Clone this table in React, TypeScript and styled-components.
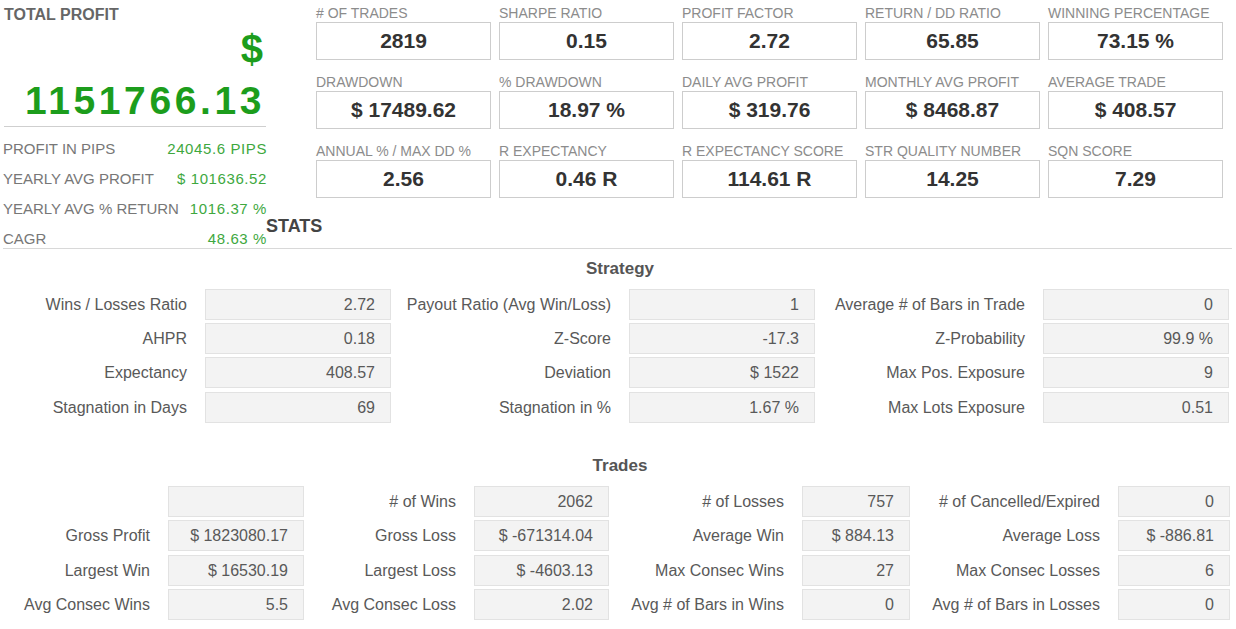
import styled, { createGlobalStyle } from "styled-components";

const GlobalStyle = createGlobalStyle`
  html, body {
    margin: 0;
    padding: 0;
    background: #fff;
  }
  body {
    font-family: "Liberation Sans", Arial, sans-serif;
    color: #555;
  }
`;

const Page = styled.div`
  width: 1236px;
`;

const Summary = styled.div`
  display: flex;
  margin: 0 4px 0 3px;
  border-bottom: 1px solid #d8d8d8;
`;

const ProfitPanel = styled.div`
  width: 263px;
  flex-shrink: 0;
`;

const PanelTitle = styled.div`
  margin-top: 6px;
  font-size: 16px;
  line-height: 18px;
  font-weight: bold;
  color: #666;
  padding-left: 1px;
`;

const Amount = styled.div`
  text-align: right;
  color: #1c9d1c;
  font-weight: bold;
  border-bottom: 1px solid #cfcfcf;
  margin-left: 1px;
  padding: 0 3px 6px 0;
`;

const Currency = styled.div`
  margin-top: 5px;
  font-size: 40px;
  line-height: 40px;
`;

const BigAmount = styled.div`
  margin-top: 12px;
  font-size: 39px;
  line-height: 39px;
  letter-spacing: 3.6px;
  margin-right: -2px;
`;

const PanelRows = styled.div`
  display: flex;
  flex-direction: column;
  gap: 12px;
  padding-top: 13px;
`;

const PanelRow = styled.div`
  display: flex;
  justify-content: space-between;
  align-items: center;
  font-size: 15px;
  line-height: 18px;
`;

const PanelLabel = styled.span`
  color: #777;
`;

const PanelValue = styled.span`
  color: #3ea83e;
  letter-spacing: 0.6px;
  margin-right: -1px;
`;

const Overview = styled.div`
  flex: 1;
  display: flex;
  flex-direction: column;
`;

const KpiGrid = styled.div`
  display: grid;
  grid-template-columns: repeat(5, 175px);
  column-gap: 8px;
  row-gap: 14px;
  margin: 5px 0 0 50px;
`;

const Kpi = styled.div`
  display: flex;
  flex-direction: column;
  gap: 1px;
`;

const KpiLabel = styled.div`
  font-size: 14px;
  line-height: 16px;
  color: #8c8c8c;
  white-space: nowrap;
`;

const KpiBox = styled.div`
  height: 36px;
  border: 1px solid #cdcdcd;
  box-sizing: content-box;
  text-align: center;
  font-size: 21px;
  font-weight: bold;
  line-height: 36px;
  color: #333;
`;

const StatsTitle = styled.div`
  margin-top: 18px;
  font-size: 18px;
  line-height: 20px;
  font-weight: bold;
  color: #444;
`;

const Section = styled.section<{ $gap: number }>`
  margin-top: ${(p) => p.$gap}px;
`;

const SectionTitle = styled.div`
  text-align: center;
  font-size: 17px;
  line-height: 20px;
  font-weight: bold;
  color: #555;
  padding-left: 4px;
`;

const StatGrid = styled.div<{ $columns: string; $rowGap: number }>`
  display: grid;
  grid-template-columns: ${(p) => p.$columns};
  row-gap: ${(p) => p.$rowGap}px;
  margin-top: 10px;
`;

const StatLabel = styled.div`
  text-align: right;
  padding-right: 18px;
  font-size: 16px;
  line-height: 31px;
  color: #595959;
  white-space: nowrap;
`;

const StatBox = styled.div`
  height: 29px;
  border: 1px solid #e2e2e2;
  background: #f3f3f3;
  text-align: right;
  padding-right: 15px;
  font-size: 16px;
  line-height: 29px;
  color: #595959;
`;

type Pair = [string, string];

const kpis: Pair[] = [
  ["# OF TRADES", "2819"],
  ["SHARPE RATIO", "0.15"],
  ["PROFIT FACTOR", "2.72"],
  ["RETURN / DD RATIO", "65.85"],
  ["WINNING PERCENTAGE", "73.15 %"],
  ["DRAWDOWN", "$ 17489.62"],
  ["% DRAWDOWN", "18.97 %"],
  ["DAILY AVG PROFIT", "$ 319.76"],
  ["MONTHLY AVG PROFIT", "$ 8468.87"],
  ["AVERAGE TRADE", "$ 408.57"],
  ["ANNUAL % / MAX DD %", "2.56"],
  ["R EXPECTANCY", "0.46 R"],
  ["R EXPECTANCY SCORE", "114.61 R"],
  ["STR QUALITY NUMBER", "14.25"],
  ["SQN SCORE", "7.29"],
];

const profitRows: Pair[] = [
  ["PROFIT IN PIPS", "24045.6 PIPS"],
  ["YEARLY AVG PROFIT", "$ 101636.52"],
  ["YEARLY AVG % RETURN", "1016.37 %"],
  ["CAGR", "48.63 %"],
];

const strategy: Pair[] = [
  ["Wins / Losses Ratio", "2.72"],
  ["Payout Ratio (Avg Win/Loss)", "1"],
  ["Average # of Bars in Trade", "0"],
  ["AHPR", "0.18"],
  ["Z-Score", "-17.3"],
  ["Z-Probability", "99.9 %"],
  ["Expectancy", "408.57"],
  ["Deviation", "$ 1522"],
  ["Max Pos. Exposure", "9"],
  ["Stagnation in Days", "69"],
  ["Stagnation in %", "1.67 %"],
  ["Max Lots Exposure", "0.51"],
];

const trades: Pair[] = [
  ["", ""],
  ["# of Wins", "2062"],
  ["# of Losses", "757"],
  ["# of Cancelled/Expired", "0"],
  ["Gross Profit", "$ 1823080.17"],
  ["Gross Loss", "$ -671314.04"],
  ["Average Win", "$ 884.13"],
  ["Average Loss", "$ -886.81"],
  ["Largest Win", "$ 16530.19"],
  ["Largest Loss", "$ -4603.13"],
  ["Max Consec Wins", "27"],
  ["Max Consec Losses", "6"],
  ["Avg Consec Wins", "5.5"],
  ["Avg Consec Loss", "2.02"],
  ["Avg # of Bars in Wins", "0"],
  ["Avg # of Bars in Losses", "0"],
];

type StatsProps = { rows: Pair[]; columns: string; rowGap: number };

function Stats({ rows, columns, rowGap }: StatsProps) {
  return (
    <StatGrid $columns={columns} $rowGap={rowGap}>
      {rows.map(([label, value], i) => [
        <StatLabel key={`l${i}`}>{label}</StatLabel>,
        <StatBox key={`v${i}`}>{value}</StatBox>,
      ])}
    </StatGrid>
  );
}

export default function App() {
  return (
    <Page>
      <GlobalStyle />
      <Summary>
        <ProfitPanel>
          <PanelTitle>TOTAL PROFIT</PanelTitle>
          <Amount>
            <Currency>$</Currency>
            <BigAmount>1151766.13</BigAmount>
          </Amount>
          <PanelRows>
            {profitRows.map(([label, value]) => (
              <PanelRow key={label}>
                <PanelLabel>{label}</PanelLabel>
                <PanelValue>{value}</PanelValue>
              </PanelRow>
            ))}
          </PanelRows>
        </ProfitPanel>
        <Overview>
          <KpiGrid>
            {kpis.map(([label, value]) => (
              <Kpi key={label}>
                <KpiLabel>{label}</KpiLabel>
                <KpiBox>{value}</KpiBox>
              </Kpi>
            ))}
          </KpiGrid>
          <StatsTitle>STATS</StatsTitle>
        </Overview>
      </Summary>
      <Section $gap={10}>
        <SectionTitle>Strategy</SectionTitle>
        <Stats
          rows={strategy}
          columns="205px 186px 238px 186px 228px 186px"
          rowGap={3.2}
        />
      </Section>
      <Section $gap={33}>
        <SectionTitle>Trades</SectionTitle>
        <Stats
          rows={trades}
          columns="168px 136px 170px 135px 193px 108px 208px 112px"
          rowGap={3.6}
        />
      </Section>
    </Page>
  );
}
